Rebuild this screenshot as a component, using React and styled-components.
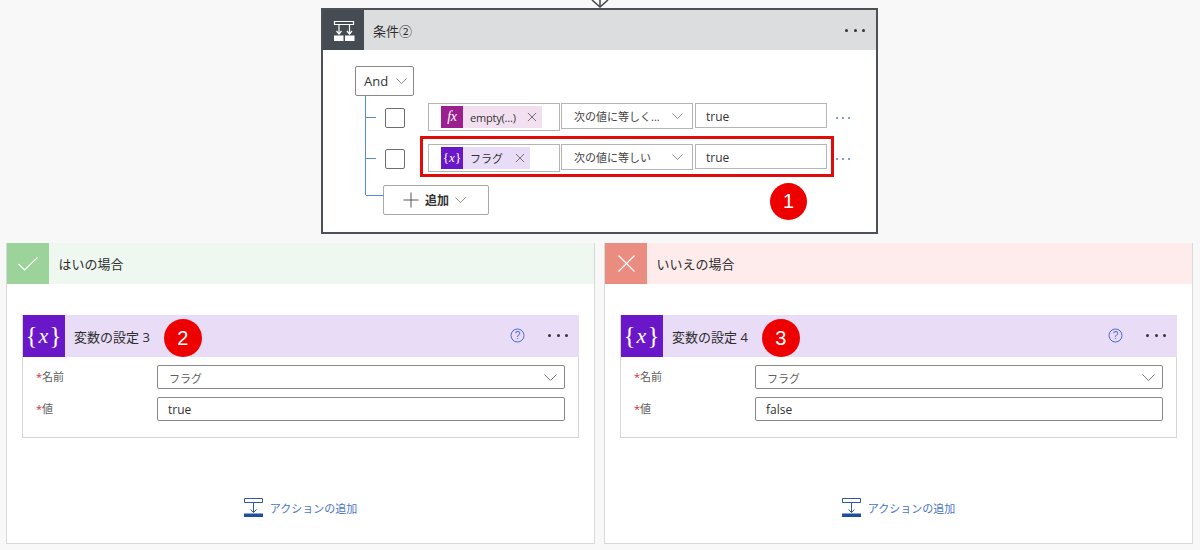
import React from "react"
import styled, { createGlobalStyle } from "styled-components"

const fontStack = `"Open Sans", "Noto Sans CJK JP", "Noto Sans", sans-serif`
const treeBlue = "#5a8ad8"

const GlobalStyle = createGlobalStyle`
  html, body {
    margin: 0;
    background: #f8f8f8;
  }
  body {
    font-family: ${fontStack};
    color: #333;
  }
  *, *::before, *::after {
    box-sizing: border-box;
  }
`

const Page = styled.div`
  width: 1200px;
  height: 550px;
  overflow: hidden;
  display: flex;
  flex-direction: column;
`
const Connector = styled.svg`
  display: block;
  align-self: center;
  margin-left: -1px;
  flex: none;
`
const ConditionCard = styled.section`
  position: relative;
  align-self: flex-start;
  margin-left: 321px;
  width: 557px;
  height: 226px;
  background: #fff;
  border: 2px solid #4d5157;
`
const CardHead = styled.header`
  display: flex;
  align-items: center;
  height: 40px;
  background: #dcdddf;
`
const IconBox = styled.div`
  flex: none;
  width: ${(p) => p.$width || 42}px;
  height: ${(p) => p.$height || 40}px;
  display: flex;
  align-items: center;
  justify-content: center;
  background: ${(p) => p.$bg};
`
const HeadTitle = styled.span`
  margin-left: ${(p) => p.$gap || 9}px;
  font-size: 13px;
  color: #2d2d2d;
`
const Dots = styled.span`
  margin-left: auto;
  margin-right: ${(p) => p.$right || 11}px;
  display: flex;
  gap: 5.5px;
  i {
    width: 3px;
    height: 3px;
    border-radius: 50%;
    background: ${(p) => p.$color || "#333"};
  }
`
const CardBody = styled.div`
  padding: 16px 0 0 32px;
`
const AndButton = styled.div`
  width: 59px;
  height: 30px;
  display: flex;
  align-items: center;
  justify-content: space-between;
  padding: 0 6px 0 8px;
  background: #fff;
  border: 1px solid #8a8886;
  border-radius: 2px;
  font-size: 13px;
`
const Tree = styled.div`
  margin-left: 10px;
  border-left: 1px solid ${treeBlue};
  height: 99px;
  padding-top: 7px;
  display: flex;
  flex-direction: column;
  gap: 13px;
`
const Row = styled.div`
  position: relative;
  display: flex;
  align-items: flex-start;
  height: 28px;
  &::before {
    content: "";
    position: absolute;
    left: 0;
    top: 14px;
    width: 10px;
    border-top: 1px solid ${treeBlue};
  }
  ${(p) =>
    p.$highlight &&
    `
    &::after {
      content: "";
      position: absolute;
      left: 54px;
      top: -8px;
      width: 414px;
      height: 41px;
      border: 3px solid #e00b0b;
      pointer-events: none;
    }
  `}
`
const Check = styled.div`
  flex: none;
  width: 20px;
  height: 20px;
  margin: 5px 23px 0 19px;
  background: #fff;
  border: 1px solid #6f6f6f;
  border-radius: 2px;
`
const TokenField = styled.div`
  flex: none;
  display: flex;
  align-items: flex-start;
  width: 132px;
  height: 28px;
  padding: 2px 0 0 12px;
  background: #fff;
  border: 1px solid #b5b5b5;
`
const Token = styled.div`
  display: flex;
  align-items: center;
  height: 22px;
  background: ${(p) => p.$bg};
  font-size: 11px;
  letter-spacing: ${(p) => p.$tight || 0}px;
  color: #333;
  svg {
    margin-left: ${(p) => p.$closeGap}px;
    margin-right: 5px;
  }
`
const TokenIcon = styled.span`
  flex: none;
  width: 22px;
  height: 22px;
  margin-right: 7px;
  display: flex;
  align-items: center;
  justify-content: center;
  background: ${(p) => p.$bg};
  color: #fff;
  font-family: "Liberation Serif", serif;
  font-style: ${(p) => (p.$upright ? "normal" : "italic")};
  font-size: ${(p) => p.$size || 14}px;
  em {
    font-style: italic;
  }
`
const OperatorSelect = styled.div`
  flex: none;
  width: 132px;
  height: 26px;
  margin-left: 1px;
  padding: 0 9px 0 12px;
  display: flex;
  align-items: center;
  justify-content: space-between;
  background: #fff;
  border: 1px solid #b5b5b5;
  font-size: 11px;
  color: #444;
`
const ValueInput = styled.div`
  flex: none;
  width: 132px;
  height: 25px;
  margin-left: 2px;
  padding: 1px 0 0 10px;
  display: flex;
  align-items: center;
  background: #fff;
  border: 1px solid #b5b5b5;
  font-size: 12px;
  color: #333;
`
const RowDots = styled(Dots)`
  margin: 0 0 0 9px;
  align-self: center;
  transform: translateY(1px);
  gap: 4px;
  i {
    width: 2px;
    height: 2px;
  }
`
const AddButton = styled.div`
  position: relative;
  margin: -10px 0 0 28px;
  width: 106px;
  height: 30px;
  display: flex;
  align-items: center;
  padding-left: 19px;
  gap: 6px;
  background: #fff;
  border: 1px solid #a8a8a8;
  border-radius: 2px;
  font-size: 12px;
  font-weight: 600;
  color: #333;
  &::before {
    content: "";
    position: absolute;
    left: -18px;
    top: 9px;
    width: 18px;
    border-top: 1px solid ${treeBlue};
  }
`
const Badge = styled.span`
  flex: none;
  width: 38px;
  height: 38px;
  display: flex;
  align-items: center;
  justify-content: center;
  border-radius: 50%;
  background: #ee0000;
  color: #fff;
  font-family: "Liberation Sans", sans-serif;
  font-size: 20px;
  margin-left: ${(p) => p.$gap || 0}px;
  margin-top: 4px;
`
const FloatBadge = styled(Badge)`
  position: absolute;
  left: 447px;
  top: 173px;
  width: 37px;
  height: 37px;
  margin: 0;
`
const Branches = styled.div`
  display: grid;
  grid-template-columns: 589px 589px;
  gap: 9px;
  padding-left: 6px;
  margin-top: 9px;
`
const Branch = styled.section`
  height: 301px;
  display: flex;
  flex-direction: column;
  background: #fff;
  border: 1px solid #d9d9d9;
`
const BranchHead = styled.header`
  display: flex;
  align-items: center;
  height: 41px;
  margin-top: -1px;
  background: ${(p) => p.$bg};
`
const ActionCard = styled.div`
  margin: 31px 15px 0 15px;
  height: 123px;
  border: 1px solid #d6d6d6;
  background: #fff;
`
const ActionHead = styled.header`
  display: flex;
  align-items: center;
  height: 42px;
  margin: -1px -1px 0 0;
  background: #e8dcf7;
`
const VarIcon = styled(IconBox)`
  color: #fff;
  font-family: "Liberation Serif", serif;
  font-size: 25px;
  letter-spacing: 1px;
  em {
    font-style: italic;
    font-size: 22px;
  }
`
const HelpIcon = styled.svg`
  margin-left: auto;
  margin-right: 23px;
  transform: translateY(-1px);
`
const ActionDots = styled(Dots)`
  margin-left: 0;
  transform: translateY(-1px);
`
const Fields = styled.div`
  display: flex;
  flex-direction: column;
  gap: 8px;
  padding: 8px 13px 0 13px;
`
const Field = styled.div`
  display: flex;
  align-items: flex-start;
`
const Label = styled.label`
  flex: none;
  width: 121px;
  font-size: 11px;
  line-height: 24px;
  color: #605e5c;
  &::before {
    content: "*";
    color: #c4314b;
  }
`
const FieldBox = styled.div`
  flex: 1;
  height: 24px;
  display: flex;
  align-items: center;
  justify-content: space-between;
  padding: 1px 7px 0 ${(p) => p.$pad || 11}px;
  border: 1px solid #8a8886;
  border-radius: 2px;
  background: #fff;
  font-size: ${(p) => p.$size || 12}px;
  color: ${(p) => p.$color || "#333"};
`
const AddAction = styled.div`
  margin-top: 60px;
  display: flex;
  align-items: center;
  justify-content: center;
  gap: 7px;
  font-size: 11px;
  color: #4b74c9;
`

const Chevron = ({ width = 11, height = 6, color = "#777" }) => (
  <svg width={width} height={height} viewBox="0 0 14 7" fill="none" preserveAspectRatio="none">
    <path d="M.5.500 7 6.500 13.500.500" stroke={color} strokeWidth="1" />
  </svg>
)

const Close = () => (
  <svg width="10" height="10" viewBox="0 0 11 11" fill="none">
    <path d="M1 1l9 9M10 1l-9 9" stroke="#666" strokeWidth="1" />
  </svg>
)

const Plus = () => (
  <svg width="16" height="16" viewBox="0 0 16 16" fill="none">
    <path d="M8 .5v15M.5 8h15" stroke="#555" strokeWidth="1" />
  </svg>
)

const ConditionIcon = () => (
  <svg width="22" height="21" viewBox="0 0 22 21" fill="none">
    <path d="M1.500 1.500h19v3h-19z" stroke="#fff" strokeWidth="1.200" />
    <path d="M6 5v9M16.500 5v9" stroke="#fff" strokeWidth="1.200" />
    <path d="M3.500 11 6 14l2.500-3M14 11l2.500 3 2.500-3" stroke="#fff" strokeWidth="1.200" />
    <path d="M1 15.500h9.500V21H1zM12 15.500h9.500V21H12z" fill="#fff" />
  </svg>
)

const AddActionIcon = () => (
  <svg width="19" height="19" viewBox="0 0 19 19" fill="none">
    <path d="M.5.500h18v4H.5z" stroke="#2f5a9e" />
    <path d="M9.500 4.500v10M6.500 11.500l3 3 3-3" stroke="#2f5a9e" />
    <path d="M0 15.500h19V19H0z" fill="#1f4e9c" />
  </svg>
)

const YesIcon = () => (
  <svg width="20" height="14" viewBox="0 0 20 14" fill="none">
    <path d="M.5 7 6.500 13 19.500.5" stroke="#fff" strokeWidth="1.100" />
  </svg>
)

const NoIcon = () => (
  <svg width="17" height="17" viewBox="0 0 17 17" fill="none">
    <path d="M.5.500l16 16M16.500.500l-16 16" stroke="#fff" strokeWidth="1.100" />
  </svg>
)

const Help = () => (
  <HelpIcon width="15" height="15" viewBox="0 0 15 15" fill="none">
    <circle cx="7.500" cy="7.500" r="6.500" stroke="#4f6bd8" />
    <text
      x="7.500"
      y="11"
      textAnchor="middle"
      fontSize="10"
      fontFamily="Liberation Sans, sans-serif"
      fill="#4f6bd8"
    >
      ?
    </text>
  </HelpIcon>
)

const ThreeDots = () => (
  <>
    <i />
    <i />
    <i />
  </>
)

const ConditionRow = ({ highlight, token, operator }) => (
  <Row $highlight={highlight}>
    <Check />
    <TokenField>{token}</TokenField>
    <OperatorSelect>
      {operator}
      <Chevron />
    </OperatorSelect>
    <ValueInput>true</ValueInput>
    <RowDots $color="#5a7fbd">
      <ThreeDots />
    </RowDots>
  </Row>
)

const ActionPanel = ({ title, badge, value }) => (
  <ActionCard>
    <ActionHead>
      <VarIcon $bg="#6917c9" $height={42}>
        {"{"}
        <em>x</em>
        {"}"}
      </VarIcon>
      <HeadTitle>{title}</HeadTitle>
      <Badge $gap={14}>{badge}</Badge>
      <Help />
      <ActionDots>
        <ThreeDots />
      </ActionDots>
    </ActionHead>
    <Fields>
      <Field>
        <Label>名前</Label>
        <FieldBox $color="#605e5c" $size={11}>
          フラグ
          <Chevron width={13} height={7} />
        </FieldBox>
      </Field>
      <Field>
        <Label>値</Label>
        <FieldBox $pad={10}>{value}</FieldBox>
      </Field>
    </Fields>
  </ActionCard>
)

const BranchPanel = ({ bg, iconBg, icon, title, action }) => (
  <Branch>
    <BranchHead $bg={bg}>
      <IconBox $bg={iconBg} $height={41}>
        {icon}
      </IconBox>
      <HeadTitle $gap={9.5}>{title}</HeadTitle>
    </BranchHead>
    <ActionPanel {...action} />
    <AddAction>
      <AddActionIcon />
      アクションの追加
    </AddAction>
  </Branch>
)

export default function App() {
  return (
    <Page>
      <GlobalStyle />
      <Connector width="20" height="8" viewBox="0 0 20 8" fill="none">
        <path d="M2 0l8 7L18 0" stroke="#444" strokeWidth="1.500" />
        <path d="M10 0v7" stroke="#444" strokeWidth="1.500" />
      </Connector>
      <ConditionCard>
        <CardHead>
          <IconBox $bg="#444b53" $width={41}>
            <ConditionIcon />
          </IconBox>
          <HeadTitle>条件②</HeadTitle>
          <Dots>
            <ThreeDots />
          </Dots>
        </CardHead>
        <CardBody>
          <AndButton>
            And
            <Chevron />
          </AndButton>
          <Tree>
            <ConditionRow
              operator="次の値に等しく..."
              token={
                <Token $bg="#f2e0f1" $closeGap={11} $tight={-0.2}>
                  <TokenIcon $bg="#9b1f8e">fx</TokenIcon>
                  empty(...)
                  <Close />
                </Token>
              }
            />
            <ConditionRow
              highlight
              operator="次の値に等しい"
              token={
                <Token $bg="#e8dcf7" $closeGap={12}>
                  <TokenIcon $bg="#6917c9" $size={13} $upright>
                    {"{"}
                    <em>x</em>
                    {"}"}
                  </TokenIcon>
                  フラグ
                  <Close />
                </Token>
              }
            />
          </Tree>
          <AddButton>
            <Plus />
            追加
            <Chevron />
          </AddButton>
        </CardBody>
        <FloatBadge>1</FloatBadge>
      </ConditionCard>
      <Branches>
        <BranchPanel
          bg="#eff8f0"
          iconBg="#9cd39b"
          icon={<YesIcon />}
          title="はいの場合"
          action={{ title: "変数の設定 3", badge: "2", value: "true" }}
        />
        <BranchPanel
          bg="#fdeceb"
          iconBg="#ea8c80"
          icon={<NoIcon />}
          title="いいえの場合"
          action={{ title: "変数の設定 4", badge: "3", value: "false" }}
        />
      </Branches>
    </Page>
  )
}
